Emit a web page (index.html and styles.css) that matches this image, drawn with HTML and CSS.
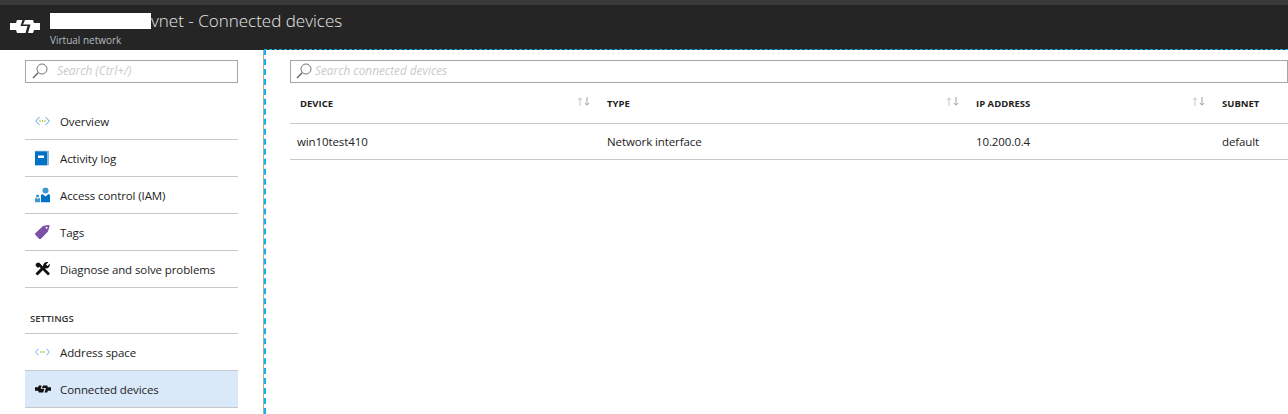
FILE: index.html
```html
<!DOCTYPE html>
<html lang="en">
<head>
<meta charset="utf-8">
<title>Connected devices</title>
<link rel="stylesheet" href="styles.css">
</head>
<body>
<div class="crumb"><span class="crumb-text">Devices</span></div>
<header class="header">
  <svg class="logo" width="30" height="15" viewBox="0 0 30 15"><path fill="#fff" d="M0 4H6L7 1H12.500L10.500 7H17.500L15.500 14H7L6 11H0ZM30 4H24L23 1H15L13 5.500H20.500L18 14H23L24 11H30Z"/></svg>
  <div class="titles">
    <div class="title"><span class="redact"></span>vnet - Connected devices</div>
    <div class="subtitle">Virtual network</div>
  </div>
</header>
<div class="body">
  <aside class="side">
    <div class="search side-search">
      <svg class="glass" width="16" height="16" viewBox="0 0 16 16"><circle cx="10" cy="6" r="5" fill="none" stroke="#777" stroke-width="1"/><path d="M6.200 9.800 1 15" stroke="#666" stroke-width="1.400"/></svg>
      <span class="ph">Search (Ctrl+/)</span>
    </div>
    <nav class="nav">
      <div class="item">
        <svg class="ico" width="15" height="10" viewBox="0 0 15 10"><path d="M4.500 1 .7 5l3.800 4M10.500 1l3.800 4-3.800 4" fill="none" stroke="#4fa3dc" stroke-width="1"/><path d="M4.500 5h1M7 5h1M9.500 5h1" stroke="#7ab800" stroke-width="1.400"/></svg>
        <span>Overview</span>
      </div>
      <div class="item">
        <svg class="ico" width="14" height="15" viewBox="0 0 14 15"><rect width="14" height="15" fill="#8fb8d8"/><rect y="1" width="12" height="14" fill="#0072c6"/><rect x="3" y="5" width="6" height="2.500" fill="#fff"/></svg>
        <span>Activity log</span>
      </div>
      <div class="item">
        <svg class="ico" width="15" height="15" viewBox="0 0 15 15"><circle cx="10.500" cy="3" r="3" fill="#3d9ad1"/><path d="M6 15V7.500l1.500-1 3 2.500 3-2.500 1.500 1V15z" fill="#0072c6"/><circle cx="2.500" cy="8.500" r="1.600" fill="#3d9ad1"/><path d="M0 15v-4l1-.8 1.500 1.300 1.500-1.300 1 .8v4z" fill="#3d9ad1"/></svg>
        <span>Access control (IAM)</span>
      </div>
      <div class="item">
        <svg class="ico" width="15" height="15" viewBox="0 0 15 15"><path d="M.5 8.500 8 1.500 13 .5c1-.2 1.700.5 1.500 1.500L13 7l-7 7.200c-.6.600-1.400.6-2 0L.5 10.500c-.6-.6-.6-1.400 0-2z" fill="#7d4fa5"/><circle cx="11.600" cy="3.300" r="1" fill="#fff"/></svg>
        <span>Tags</span>
      </div>
      <div class="item">
        <svg class="ico" width="15" height="14" viewBox="0 0 15 14"><path d="M3 1.500 14 12.500" stroke="#111" stroke-width="2.600" fill="none"/><path d="M1 1.500 3.500 .5 6 3 3 6 .5 3.500z" fill="#111"/><path d="M1.500 12.500 10 4" stroke="#111" stroke-width="3" fill="none"/><path d="M8 4.500C8 1.500 10.500-.5 13.300.3L11 2.500 12.500 4l2.200-2.200C15.500 4.500 13 7 10 6.500z" fill="#111"/></svg>
        <span>Diagnose and solve problems</span>
      </div>
    </nav>
    <div class="group">SETTINGS</div>
    <nav class="nav">
      <div class="item">
        <svg class="ico" width="15" height="8" viewBox="0 0 15 8"><path d="M3.500 .7.700 4l2.800 3.300M11.500 .7 14.300 4l-2.800 3.300" fill="none" stroke="#6fb7e4" stroke-width="1"/><path d="M5.500 4h1.200M8.300 4h1.200" stroke="#7ab800" stroke-width="1.400"/></svg>
        <span>Address space</span>
      </div>
      <div class="item active">
        <svg class="ico" width="16" height="8" viewBox="0 0 30 15"><path fill="#111" d="M0 4H6L7 1H12.500L10.500 7H17.500L15.500 14H7L6 11H0ZM30 4H24L23 1H15L13 5.500H20.500L18 14H23L24 11H30Z"/></svg>
        <span>Connected devices</span>
      </div>
    </nav>
  </aside>
  <main class="main">
    <div class="search main-search">
      <svg class="glass" width="16" height="16" viewBox="0 0 16 16"><circle cx="10" cy="6" r="5" fill="none" stroke="#777" stroke-width="1"/><path d="M6.200 9.800 1 15" stroke="#666" stroke-width="1.400"/></svg>
      <span class="ph">Search connected devices</span>
    </div>
    <div class="thead">
      <div class="th"><span>DEVICE</span><svg class="sort" width="13" height="9" viewBox="0 0 13 9"><path d="M3 9V1M.8 3 3 .8 5.200 3" fill="none" stroke="#c4c4c4"/><path d="M10 0v8M7.800 6 10 8.200 12.200 6" fill="none" stroke="#a0a0a0"/></svg></div>
      <div class="th"><span>TYPE</span><svg class="sort" width="13" height="9" viewBox="0 0 13 9"><path d="M3 9V1M.8 3 3 .8 5.200 3" fill="none" stroke="#c4c4c4"/><path d="M10 0v8M7.800 6 10 8.200 12.200 6" fill="none" stroke="#a0a0a0"/></svg></div>
      <div class="th"><span>IP ADDRESS</span><svg class="sort" width="13" height="9" viewBox="0 0 13 9"><path d="M3 9V1M.8 3 3 .8 5.200 3" fill="none" stroke="#c4c4c4"/><path d="M10 0v8M7.800 6 10 8.200 12.200 6" fill="none" stroke="#a0a0a0"/></svg></div>
      <div class="th"><span>SUBNET</span></div>
    </div>
    <div class="trow">
      <div>win10test410</div>
      <div>Network interface</div>
      <div>10.200.0.4</div>
      <div>default</div>
    </div>
  </main>
</div>
</body>
</html>
```
FILE: styles.css
```css
* { box-sizing: border-box; }
html, body { margin: 0; height: 100%; overflow: hidden; }
body { background: #fff; color: #222; font-family: "Open Sans", "Noto Sans", sans-serif; font-size: 11.500px; letter-spacing: -0.1px; width: 1288px; height: 414px; }
.crumb { height: 5px; background: #3a3a3a; overflow: hidden; padding-left: 4px; }
.crumb-text { display: block; font-size: 11px; line-height: 12px; color: #d9b08c; transform: translateY(-10px); }
.header { height: 45px; background: #252525; display: flex; align-items: flex-start; padding-left: 10px; }
.logo { margin-top: 14px; margin-right: 10px; flex: none; }
.titles { color: #fff; }
.title { display: flex; align-items: center; height: 16px; margin-top: 8px; font-size: 17px; font-weight: 300; letter-spacing: 0; color: #e8e8e8; white-space: nowrap; line-height: 18px; }
.redact { display: inline-block; width: 101px; height: 16px; background: #fff; }
.subtitle { font-size: 10px; letter-spacing: 0; color: #b4bcc4; margin-top: 5px; line-height: 13px; }
.body { display: flex; height: 364px; }
.side { width: 264px; flex: none; padding: 10px 0 0 25px; border-right: 1px solid #aaa; }
.search { height: 23px; border: 1px solid #a6a6a6; display: flex; align-items: center; font-style: italic; color: #cacaca; font-size: 11.800px; letter-spacing: 0; background: #fff; padding-bottom: 1px; }
.search .ph { transform: translateY(-1px); }
.side-search { width: 213px; padding-left: 6px; }
.side-search .ph { margin-left: 9px; }
.main-search { padding-left: 5px; }
.main-search .ph { margin-left: 3px; }
.nav { display: flex; flex-direction: column; }
.side-search + .nav { margin-top: 20px; }
.item { width: 213px; height: 37px; border-bottom: 1px solid #c8c8c8; display: flex; align-items: center; padding-left: 35px; position: relative; white-space: nowrap; }
.item .ico { position: absolute; left: 10px; top: 50%; transform: translateY(-50%); }
.active { background: #d9e9f9; }
.group { width: 213px; height: 46px; border-bottom: 1px solid #c8c8c8; font-size: 9.500px; font-weight: 600; letter-spacing: 0; padding: 24px 0 0 5px; line-height: 14px; color: #333; }
.main { flex: 1; min-width: 0; margin-top: -1px; height: 365px; padding: 10px 0 0 24px; border-left: 2px dashed #12b4e8; border-top: 1px dashed #12b4e8; position: relative; }
.thead, .trow { display: grid; }
.thead { grid-template-columns: 307px 369px 246px 1fr; height: 41px; border-bottom: 1px solid #c8c8c8; padding-left: 10px; align-items: center; font-size: 9.500px; font-weight: 700; letter-spacing: 0; }
.th { display: flex; justify-content: space-between; align-items: center; padding-right: 17px; }
.sort { transform: translateY(-2px); flex: none; }
.trow { grid-template-columns: 310px 369px 246px 1fr; height: 36px; border-bottom: 1px solid #c8c8c8; padding-left: 7px; align-items: center; }
```
